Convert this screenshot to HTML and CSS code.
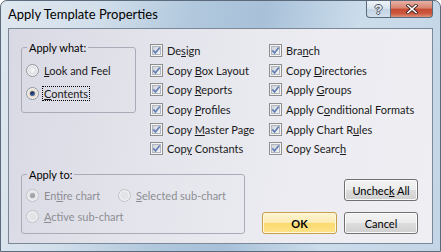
FILE: index.html
```html
<!DOCTYPE html>
<html lang="en">
<head>
    <meta charset="UTF-8">
    <title>Apply Template Properties</title>
    <link rel="stylesheet" href="styles.css">
</head>
<body>
    <svg class="defs" xmlns="http://www.w3.org/2000/svg">
        <defs>
            <linearGradient id="cbfill" x1="0" y1="0" x2="1" y2="1">
                <stop offset="0" stop-color="#ccd1d8"/>
                <stop offset="1" stop-color="#f7f7f7"/>
            </linearGradient>
            <radialGradient id="rdfill" cx="0.5" cy="0.5" r="0.6">
                <stop offset="0" stop-color="#fbfbfb"/>
                <stop offset="1" stop-color="#cfd3d9"/>
            </radialGradient>
            <radialGradient id="rddot" cx="0.4" cy="0.4" r="0.7">
                <stop offset="0" stop-color="#0c1f44"/>
                <stop offset="1" stop-color="#6787c0"/>
            </radialGradient>
            <symbol id="cb" viewBox="0 0 13 13">
                <rect x="0.5" y="0.5" width="12" height="12" fill="#f4f4f4" stroke="#8e8f8f"/>
                <rect x="2.5" y="2.5" width="8" height="8" fill="url(#cbfill)" stroke="#b2b7bf"/>
                <path d="M3.3 6.4 L5.5 8.9 L9.8 3.4" fill="none" stroke="#6580b4" stroke-width="1.7"/>
            </symbol>
            <symbol id="rd" viewBox="0 0 13 13">
                <circle cx="6.5" cy="6.5" r="6" fill="#f3f3f3" stroke="#8f959c"/>
                <circle cx="6.5" cy="6.5" r="4.3" fill="url(#rdfill)"/>
            </symbol>
            <symbol id="rd-on" viewBox="0 0 13 13">
                <circle cx="6.5" cy="6.5" r="6" fill="#f3f3f3" stroke="#8f959c"/>
                <circle cx="6.5" cy="6.5" r="4.3" fill="#e9d9c6"/>
                <circle cx="6.5" cy="6.5" r="2.6" fill="url(#rddot)"/>
            </symbol>
            <symbol id="rd-off" viewBox="0 0 13 13">
                <circle cx="6.5" cy="6.5" r="6" fill="#f0f0f2" stroke="#bcc0c5"/>
                <circle cx="6.5" cy="6.5" r="4.3" fill="#e3e4e8"/>
            </symbol>
            <symbol id="rd-offon" viewBox="0 0 13 13">
                <circle cx="6.5" cy="6.5" r="6" fill="#f0f0f2" stroke="#bcc0c5"/>
                <circle cx="6.5" cy="6.5" r="4.3" fill="#e3e4e8"/>
                <circle cx="6.5" cy="6.5" r="2.6" fill="#a3a5aa"/>
            </symbol>
        </defs>
    </svg>

    <div class="window">
        <div class="titlebar">
            <span class="title">Apply Template Properties</span>
            <div class="caption-buttons">
                <span class="cap-btn help">?</span>
                <span class="cap-btn close">
                    <svg width="12" height="10" viewBox="0 0 12 10">
                        <path d="M2 1.5 L10 8.5 M10 1.5 L2 8.5" stroke="#3c2420" stroke-width="3.4" stroke-linecap="square"/>
                        <path d="M2 1.5 L10 8.5 M10 1.5 L2 8.5" stroke="#ffffff" stroke-width="1.6" stroke-linecap="square"/>
                    </svg>
                </span>
            </div>
        </div>

        <div class="client">
            <div class="top">
                <fieldset class="group what">
                    <legend>Apply what:</legend>
                    <label class="opt"><svg class="mark"><use href="#rd"/></svg><span><u>L</u>ook and Feel</span></label>
                    <label class="opt"><svg class="mark"><use href="#rd-on"/></svg><span class="focus"><u>C</u>ontents</span></label>
                </fieldset>

                <div class="checks">
                    <div class="col first">
                        <label class="opt chk"><svg class="mark"><use href="#cb"/></svg><span>De<u>s</u>ign</span></label>
                        <label class="opt chk"><svg class="mark"><use href="#cb"/></svg><span>Copy <u>B</u>ox Layout</span></label>
                        <label class="opt chk"><svg class="mark"><use href="#cb"/></svg><span>Copy <u>R</u>eports</span></label>
                        <label class="opt chk"><svg class="mark"><use href="#cb"/></svg><span>Copy <u>P</u>rofiles</span></label>
                        <label class="opt chk"><svg class="mark"><use href="#cb"/></svg><span>Copy <u>M</u>aster Page</span></label>
                        <label class="opt chk"><svg class="mark"><use href="#cb"/></svg><span>Cop<u>y</u> Constants</span></label>
                    </div>
                    <div class="col">
                        <label class="opt chk"><svg class="mark"><use href="#cb"/></svg><span>Bra<u>n</u>ch</span></label>
                        <label class="opt chk"><svg class="mark"><use href="#cb"/></svg><span>Copy <u>D</u>irectories</span></label>
                        <label class="opt chk"><svg class="mark"><use href="#cb"/></svg><span>Apply <u>G</u>roups</span></label>
                        <label class="opt chk"><svg class="mark"><use href="#cb"/></svg><span>Apply C<u>o</u>nditional Formats</span></label>
                        <label class="opt chk"><svg class="mark"><use href="#cb"/></svg><span>Apply Chart R<u>u</u>les</span></label>
                        <label class="opt chk"><svg class="mark"><use href="#cb"/></svg><span>Copy Searc<u>h</u></span></label>
                    </div>
                </div>
            </div>

            <div class="bottom">
                <fieldset class="group to">
                    <legend>Apply to:</legend>
                    <div class="to-row">
                        <label class="opt off entire"><svg class="mark"><use href="#rd-offon"/></svg><span>En<u>t</u>ire chart</span></label>
                        <label class="opt off"><svg class="mark"><use href="#rd-off"/></svg><span><u>S</u>elected sub-chart</span></label>
                    </div>
                    <label class="opt off"><svg class="mark"><use href="#rd-off"/></svg><span><u>A</u>ctive sub-chart</span></label>
                </fieldset>

                <div class="actions">
                    <button class="btn">Unchec<u>k</u> All</button>
                    <div class="btn-row">
                        <button class="btn default">OK</button>
                        <button class="btn">Cancel</button>
                    </div>
                </div>
            </div>
        </div>
    </div>
</body>
</html>
```

FILE: styles.css
```css
* {
    box-sizing: border-box;
}

body {
    margin: 0;
    font-family: Lato, "Liberation Sans", sans-serif;
    font-size: 11px;
    color: #1a1a1a;
}

.defs {
    display: block;
    width: 0;
    height: 0;
}

.window {
    width: 441px;
    height: 252px;
    border: 1px solid #5c6b7b;
    border-radius: 7px 7px 0 0;
    background: linear-gradient(100deg, #dfe7ef 0%, #d2dfeb 20%, #b1c8dd 40%, #a8c1d9 55%, #cbdceb 75%, #c3d5e6 100%);
    display: flex;
    flex-direction: column;
}

.titlebar {
    height: 27px;
    display: flex;
    justify-content: space-between;
    align-items: flex-start;
}

.title {
    padding: 5px 0 0 7px;
    font-size: 13px;
    line-height: 16px;
    color: #000;
}

.caption-buttons {
    display: flex;
    margin-right: 7px;
}

.cap-btn {
    height: 17px;
    border: 1px solid #5a6b7e;
    border-top: none;
    display: flex;
    align-items: center;
    justify-content: center;
}

.help {
    width: 25px;
    border-radius: 0 0 0 4px;
    background: linear-gradient(#eef3f8, #d6e2ee 50%, #c3d3e3 51%, #d3e0ec);
    font-family: "Liberation Sans", sans-serif;
    font-weight: bold;
    font-size: 13px;
    color: #eef2f6;
    text-shadow: 1px 0 #4a5564, -1px 0 #4a5564, 0 1px #4a5564, 0 -1px #4a5564;
}

.close {
    width: 42px;
    border-left: none;
    border-radius: 0 0 4px 0;
    background: linear-gradient(#e7b0a4, #d88470 45%, #c54a31 50%, #cc5a3f 80%, #e0927c);
}

.client {
    margin: 0 7px;
    height: 216px;
    border: 1px solid #7d8896;
    background: linear-gradient(100deg, #d9d9e4 0%, #e4e4ec 35%, #ececf2 70%, #eeeef3 100%);
    padding: 11px 0 0 12px;
}

.top {
    height: 127px;
    display: flex;
    align-items: flex-start;
}

.group {
    margin: 0;
    border: 1px solid #a9acb8;
    border-radius: 3px;
    padding: 6px 4px 9px 4px;
}

.group legend {
    margin-left: 1px;
    padding: 0 2px;
    line-height: 15px;
    color: #000;
}

.what {
    width: 115px;
    display: flex;
    flex-direction: column;
    gap: 4px;
}

.opt {
    height: 19px;
    display: flex;
    align-items: center;
    gap: 5px;
    white-space: nowrap;
}

.mark {
    width: 13px;
    height: 13px;
    flex: none;
}

.focus {
    outline: 1px dotted #000;
    outline-offset: 0;
    padding: 0 1px;
    margin-left: -1px;
}

.checks {
    display: flex;
    margin: 1px 0 0 14px;
}

.col .chk {
    height: 19.6px;
    gap: 4px;
}

.col.first {
    width: 119px;
}

.bottom {
    display: flex;
}

.to {
    width: 224px;
    height: 67px;
    padding: 4px 4px 0 4px;
    display: flex;
    flex-direction: column;
    gap: 2px;
}

.to-row {
    display: flex;
}

.entire {
    width: 92px;
}

.off {
    color: #8d8e92;
}

.actions {
    flex: 1;
    display: flex;
    flex-direction: column;
    align-items: flex-end;
    padding: 12px 14px 0 0;
}

.btn-row {
    display: flex;
    gap: 7px;
    margin-top: 11px;
}

.btn {
    width: 74px;
    height: 22px;
    padding: 0;
    font-family: inherit;
    font-size: 11px;
    color: #000;
    border: 1px solid #707070;
    border-radius: 3px;
    box-shadow: inset 0 0 0 1px #fbfbfb;
    background: linear-gradient(#f3f3f3, #ebebeb 50%, #dddddd 51%, #cfcfcf);
}

.btn.default {
    width: 75px;
    font-weight: bold;
    border-color: #c7a04c;
    box-shadow: inset 0 0 0 1px #fff8de;
    background: linear-gradient(#fdf4d2, #fcebb0 50%, #fbd96e 51%, #fde38c);
}
```
